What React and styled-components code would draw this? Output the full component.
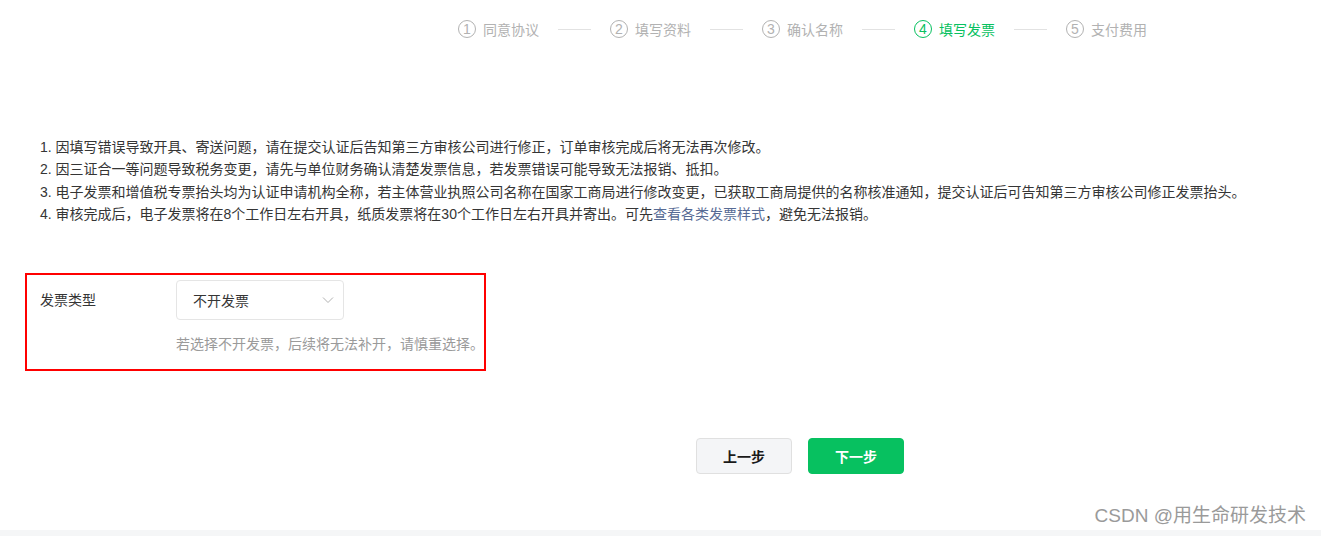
import React from "react";
import styled, { createGlobalStyle } from "styled-components";

const GlobalStyle = createGlobalStyle`
  html, body {
    margin: 0;
    padding: 0;
    background: #f5f6f7;
  }
  body {
    font-family: "Liberation Sans", "Noto Sans CJK SC", sans-serif;
    color: #353535;
  }
`;

const steps = ["同意协议", "填写资料", "确认名称", "填写发票", "支付费用"];
const ACTIVE = 3;

const notes = [
  "因填写错误导致开具、寄送问题，请在提交认证后告知第三方审核公司进行修正，订单审核完成后将无法再次修改。",
  "因三证合一等问题导致税务变更，请先与单位财务确认清楚发票信息，若发票错误可能导致无法报销、抵扣。",
  "电子发票和增值税专票抬头均为认证申请机构全称，若主体营业执照公司名称在国家工商局进行修改变更，已获取工商局提供的名称核准通知，提交认证后可告知第三方审核公司修正发票抬头。",
];

const App = () => {
  return (
    <>
      <GlobalStyle />
      <Page>
        <Stepper>
          {steps.map((name, i) => (
            <React.Fragment key={name}>
              {i > 0 && <StepLine />}
              <Step $active={i === ACTIVE}>
                <StepNum>{i + 1}</StepNum>
                <span>{name}</span>
              </Step>
            </React.Fragment>
          ))}
        </Stepper>

        <Notes>
          {notes.map((n, i) => (
            <li key={i}>
              {i + 1}. {n}
            </li>
          ))}
          <li>
            4. 审核完成后，电子发票将在8个工作日左右开具，纸质发票将在30个工作日左右开具并寄出。可先
            <a href="#">查看各类发票样式</a>，避免无法报销。
          </li>
        </Notes>

        <FormBox>
          <FormRow>
            <Label>发票类型</Label>
            <Field>
              <Select>
                <span>不开发票</span>
                <svg width="12" height="8" viewBox="0 0 12 8">
                  <path d="M1 1.5 L6 6.5 L11 1.5" fill="none" stroke="#b2b2b2" strokeWidth="1" />
                </svg>
              </Select>
              <Hint>若选择不开发票，后续将无法补开，请慎重选择。</Hint>
            </Field>
          </FormRow>
        </FormBox>

        <Actions>
          <Button>上一步</Button>
          <Button $primary>下一步</Button>
        </Actions>

        <Watermark>CSDN @用生命研发技术</Watermark>
      </Page>
    </>
  );
};

const Page = styled.div`
  position: relative;
  background: #fff;
  height: 530px;
  box-sizing: border-box;
  overflow: hidden;
`;

const Stepper = styled.div`
  height: 58px;
  display: flex;
  align-items: center;
  padding-left: 458px;
`;

const Step = styled.div`
  display: flex;
  align-items: center;
  gap: 7px;
  font-size: 14px;
  color: ${(p) => (p.$active ? "#07c160" : "#b2b2b2")};
  white-space: nowrap;
`;

const StepNum = styled.span`
  width: 16px;
  height: 16px;
  border: 1px solid currentColor;
  border-radius: 50%;
  display: flex;
  align-items: center;
  justify-content: center;
  font-size: 14px;
  line-height: 1;
`;

const StepLine = styled.div`
  width: 33px;
  height: 1px;
  background: #e2e2e2;
  margin: 0 19px;
`;

const Notes = styled.ul`
  list-style: none;
  margin: 78px 0 0;
  padding: 0 0 0 40px;
  font-size: 14px;
  line-height: 22.4px;
  color: #353535;
  a {
    color: #576b95;
    text-decoration: none;
  }
`;

const FormBox = styled.div`
  margin: 47px 0 0 25px;
  width: 461px;
  border: 2px solid #f00;
  box-sizing: border-box;
  padding: 5px 0 15px 13px;
`;

const FormRow = styled.div`
  display: flex;
  align-items: flex-start;
`;

const Label = styled.div`
  width: 136px;
  font-size: 14px;
  line-height: 40px;
  color: #353535;
`;

const Field = styled.div`
  display: flex;
  flex-direction: column;
  gap: 14px;
`;

const Select = styled.div`
  width: 168px;
  height: 40px;
  box-sizing: border-box;
  border: 1px solid #e5e5e5;
  border-radius: 4px;
  display: flex;
  align-items: center;
  justify-content: space-between;
  padding: 0 9px 0 16px;
  font-size: 14px;
  color: #353535;
`;

const Hint = styled.div`
  font-size: 14px;
  line-height: 20px;
  color: #9a9a9a;
  white-space: nowrap;
`;

const Actions = styled.div`
  display: flex;
  justify-content: center;
  gap: 16px;
  margin-top: 67px;
  padding-left: 279px;
`;

const Button = styled.button`
  width: 96px;
  height: 36px;
  box-sizing: border-box;
  border-radius: 4px;
  font-family: inherit;
  font-size: 14px;
  font-weight: 700;
  cursor: pointer;
  border: 1px solid ${(p) => (p.$primary ? "#07c160" : "#e0e0e0")};
  background: ${(p) => (p.$primary ? "#07c160" : "#f4f5f7")};
  color: ${(p) => (p.$primary ? "#fff" : "#1a1a1a")};
`;

const Watermark = styled.div`
  position: absolute;
  right: 15px;
  bottom: 1px;
  font-size: 19px;
  line-height: 26px;
  color: #9a9a9a;
  white-space: nowrap;
`;

export default App;
